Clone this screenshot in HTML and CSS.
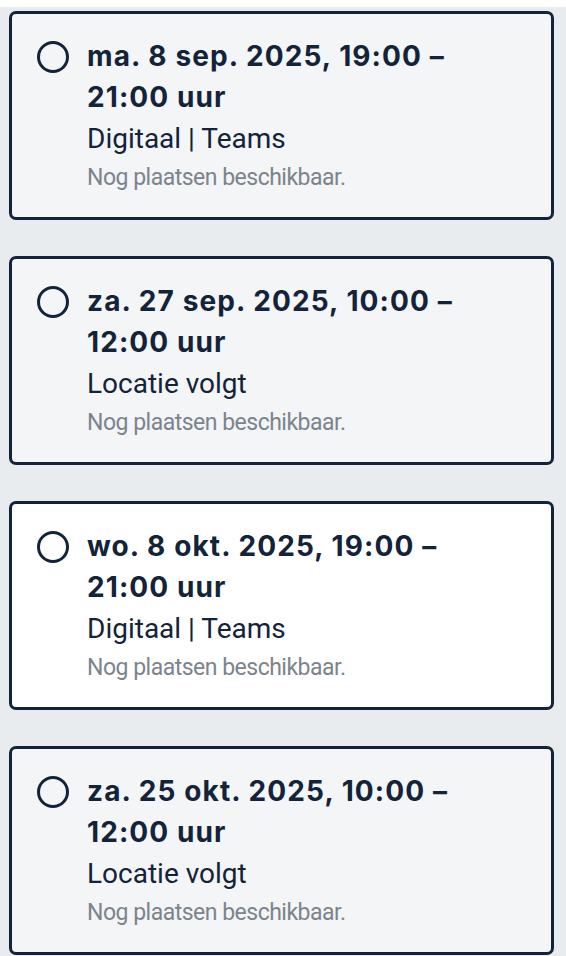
FILE: index.html
```html
<!DOCTYPE html>
<html lang="nl">
<head>
  <meta charset="UTF-8" />
  <meta name="viewport" content="width=device-width, initial-scale=1.0">
  <title>Kies een datum</title>
  <link rel="stylesheet" href="styles.css">
</head>
<body>
  <div class="lijst">
    <label class="optie">
      <span class="radio"></span>
      <span class="info">
        <span class="datum">ma. 8 sep. 2025, 19:00 – 21:00 uur</span>
        <span class="locatie">Digitaal | Teams</span>
        <span class="status">Nog plaatsen beschikbaar.</span>
      </span>
    </label>

    <label class="optie">
      <span class="radio"></span>
      <span class="info">
        <span class="datum">za. 27 sep. 2025, 10:00 – 12:00 uur</span>
        <span class="locatie">Locatie volgt</span>
        <span class="status">Nog plaatsen beschikbaar.</span>
      </span>
    </label>

    <!-- deze kaart staat onder de muis -->
    <label class="optie actief">
      <span class="radio"></span>
      <span class="info">
        <span class="datum">wo. 8 okt. 2025, 19:00 – 21:00 uur</span>
        <span class="locatie">Digitaal | Teams</span>
        <span class="status">Nog plaatsen beschikbaar.</span>
      </span>
    </label>

    <label class="optie">
      <span class="radio"></span>
      <span class="info">
        <span class="datum">za. 25 okt. 2025, 10:00 – 12:00 uur</span>
        <span class="locatie">Locatie volgt</span>
        <span class="status">Nog plaatsen beschikbaar.</span>
      </span>
    </label>
  </div>
</body>
</html>
```

FILE: styles.css
```css
body {
  margin: 0;
  padding: 0;
  background: #ffffff;
  font-family: Roboto, "Noto Sans", Arial, sans-serif;
  color: #12233a;
}

.lijst {
  margin-top: 7px;
  background-color: #e9ecef;
  padding: 4px 12px 4px 9px;
  display: flex;
  flex-direction: column;
  gap: 36px;
  min-height: 949px;
  box-sizing: border-box;
}

.optie {
  display: flex;
  align-items: flex-start;
  gap: 18px;
  height: 209px;
  box-sizing: border-box;
  padding: 22px 20px 0 25px;
  border: 3px solid #12233a;
  border-radius: 7px;
  background-color: #f3f5f7;
  cursor: pointer;
}

.optie.actief {
  background-color: #ffffff;
}

.radio {
  flex: none;
  width: 32px;
  height: 32px;
  margin-top: 5px;
  border: 3px solid #12233a;
  border-radius: 50%;
  box-sizing: border-box;
}

.info {
  display: flex;
  flex-direction: column;
}

.datum {
  font-family: Inter, Roboto, sans-serif;
  font-size: 28px;
  font-weight: bold;
  line-height: 41px;
  letter-spacing: 1.1px;
  max-width: 400px;
}

.locatie {
  font-size: 28px;
  line-height: 41px;
}

.status {
  margin-top: 4px;
  font-size: 23px;
  line-height: 30px;
  letter-spacing: -0.5px;
  color: #7b848d;
}
```
